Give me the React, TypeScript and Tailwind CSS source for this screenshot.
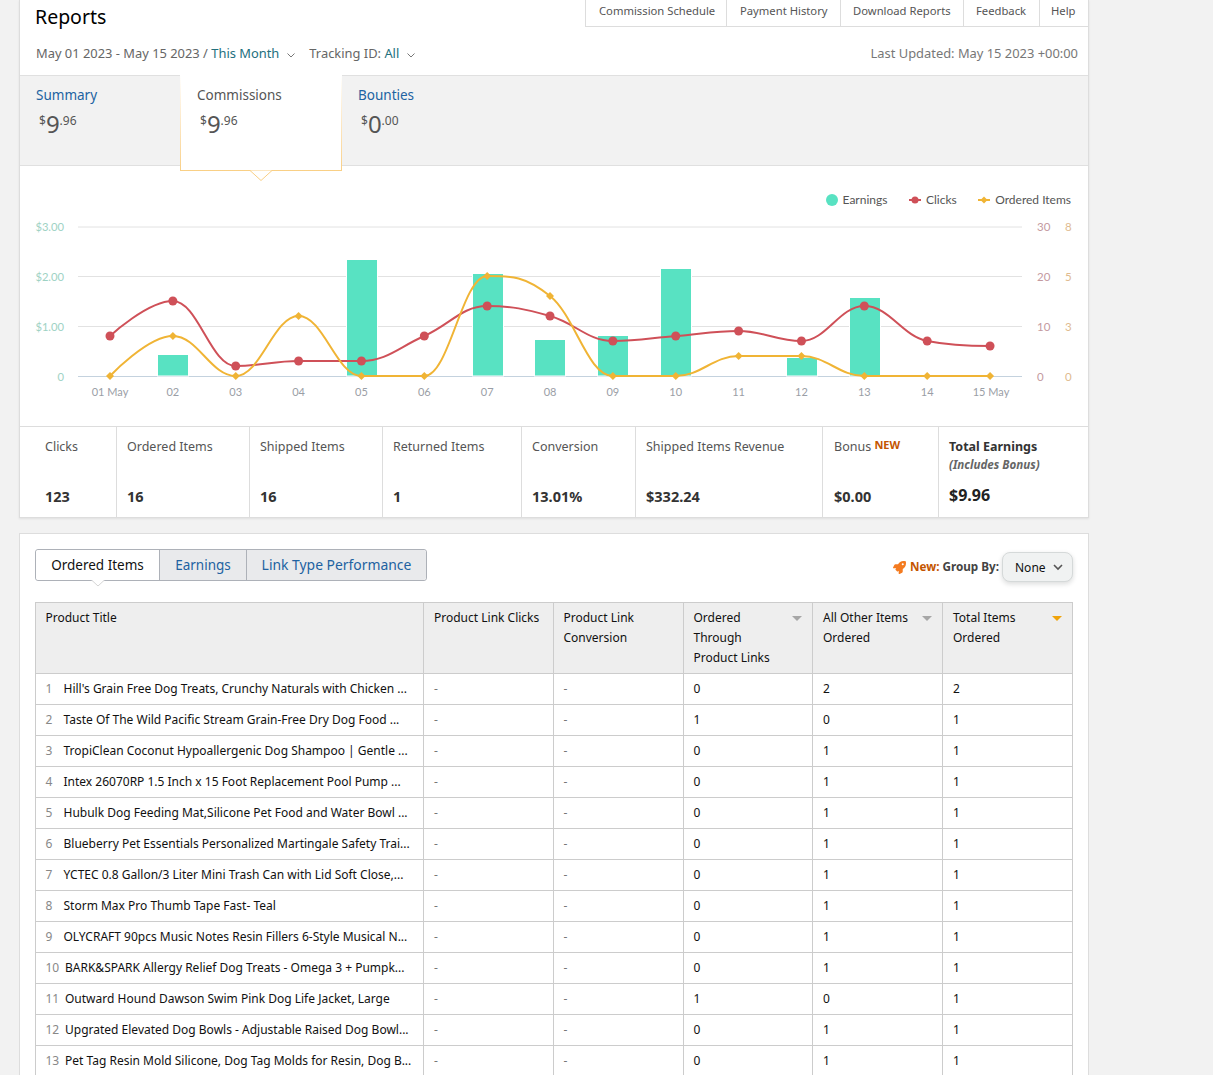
import { FaRocket } from "react-icons/fa";

type Pt = [number, number];

const xs = Array.from({ length: 15 }, (_, i) => 110 + i * 62.86);
const clicks = [336, 301, 366, 361, 361, 336, 306, 316, 341, 336, 331, 341, 306, 341, 346];
const ordered = [376, 336, 376, 316, 376, 376, 276, 296, 376, 376, 356, 356, 376, 376, 376];
const bars: Pt[] = [[173, 355], [362, 260], [488, 274], [550, 340], [613, 336], [676, 269], [802, 358], [865, 298]];
const xLabels = ["01 May", "02", "03", "04", "05", "06", "07", "08", "09", "10", "11", "12", "13", "14", "15 May"];

function spline(ys: number[]): string {
  const pts: Pt[] = ys.map((y, i) => [xs[i], y]);
  const s = 1.5;
  const d = 2.5;
  const ctrl: { l: Pt; r: Pt }[] = pts.map(([x, y], i) => {
    if (i === 0 || i === pts.length - 1) return { l: [x, y], r: [x, y] };
    const [px, py] = pts[i - 1];
    const [nx, ny] = pts[i + 1];
    let lx = (s * x + px) / d;
    let ly = (s * y + py) / d;
    let rx = (s * x + nx) / d;
    let ry = (s * y + ny) / d;
    const c = ((ry - ly) * (rx - x)) / (rx - lx) + y - ry;
    ly += c;
    ry += c;
    if (ly > py && ly > y) {
      ly = Math.max(py, y);
      ry = 2 * y - ly;
    } else if (ly < py && ly < y) {
      ly = Math.min(py, y);
      ry = 2 * y - ly;
    }
    if (ry > ny && ry > y) {
      ry = Math.max(ny, y);
      ly = 2 * y - ry;
    } else if (ry < ny && ry < y) {
      ry = Math.min(ny, y);
      ly = 2 * y - ry;
    }
    return { l: [lx, ly], r: [rx, ry] };
  });
  let out = `M${pts[0][0]} ${pts[0][1]}`;
  for (let i = 1; i < pts.length; i++) {
    out += ` C${ctrl[i - 1].r[0]} ${ctrl[i - 1].r[1]} ${ctrl[i].l[0]} ${ctrl[i].l[1]} ${pts[i][0]} ${pts[i][1]}`;
  }
  return out;
}

const topLinks = [
  { t: "Commission Schedule", c: "w-[141px] pl-[13px]" },
  { t: "Payment History", c: "w-[114px] pl-[13px]" },
  { t: "Download Reports", c: "w-[123px] pl-[12px]" },
  { t: "Feedback", c: "w-[76px] pl-[12px]" },
  { t: "Help", c: "w-[48px] pl-[11px]" },
];

const metrics = [
  { l: "Clicks", v: "123", c: "w-[97px] pl-[25px]" },
  { l: "Ordered Items", v: "16", c: "w-[133px] pl-[10px]" },
  { l: "Shipped Items", v: "16", c: "w-[133px] pl-[10px]" },
  { l: "Returned Items", v: "1", c: "w-[139px] pl-[10px]" },
  { l: "Conversion", v: "13.01%", c: "w-[114px] pl-[10px]" },
  { l: "Shipped Items Revenue", v: "$332.24", c: "w-[187px] pl-[10px]" },
];

const rows: [string, number, number, number][] = [
  ["Hill's Grain Free Dog Treats, Crunchy Naturals with Chicken ...", 0, 2, 2],
  ["Taste Of The Wild Pacific Stream Grain-Free Dry Dog Food ...", 1, 0, 1],
  ["TropiClean Coconut Hypoallergenic Dog Shampoo | Gentle ...", 0, 1, 1],
  ["Intex 26070RP 1.5 Inch x 15 Foot Replacement Pool Pump ...", 0, 1, 1],
  ["Hubulk Dog Feeding Mat,Silicone Pet Food and Water Bowl ...", 0, 1, 1],
  ["Blueberry Pet Essentials Personalized Martingale Safety Trai...", 0, 1, 1],
  ["YCTEC 0.8 Gallon/3 Liter Mini Trash Can with Lid Soft Close,...", 0, 1, 1],
  ["Storm Max Pro Thumb Tape Fast- Teal", 0, 1, 1],
  ["OLYCRAFT 90pcs Music Notes Resin Fillers 6-Style Musical N...", 0, 1, 1],
  ["BARK&SPARK Allergy Relief Dog Treats - Omega 3 + Pumpk...", 0, 1, 1],
  ["Outward Hound Dawson Swim Pink Dog Life Jacket, Large", 1, 0, 1],
  ["Upgrated Elevated Dog Bowls - Adjustable Raised Dog Bowl...", 0, 1, 1],
  ["Pet Tag Resin Mold Silicone, Dog Tag Molds for Resin, Dog B...", 0, 1, 1],
];

function Chevron() {
  return (
    <svg width="8" height="5" viewBox="0 0 8 5" className="mt-[4px]">
      <path d="M0.5 0.5 L4 4 L7.5 0.5" fill="none" stroke="#777" strokeWidth="1" />
    </svg>
  );
}

function Money({ w, f }: { w: string; f: string }) {
  return (
    <div className="mt-[3px] ml-[3px] flex items-start text-[#555]">
      <span className="text-[12px] leading-[18px] mt-[5px]">$</span>
      <span className="text-[24px] leading-[28px] mt-[3px]">{w}</span>
      <span className="text-[12px] leading-[18px] mt-[5px]">.{f}</span>
    </div>
  );
}

function Sort({ color }: { color: string }) {
  return (
    <svg width="10" height="5" viewBox="0 0 10 5" className="mt-[8px] shrink-0">
      <path d="M0 0 H10 L5 5 Z" fill={color} />
    </svg>
  );
}

function Chart() {
  return (
    <svg width="1068" height="211" viewBox="20 215 1068 211" className="block font-['Lato',sans-serif]">
      {[227, 276.5, 326.5].map((y) => (
        <line key={y} x1="78" x2="1022" y1={y} y2={y} stroke="#e2e2e2" strokeWidth="1" />
      ))}
      <line x1="78" x2="1022" y1="376.5" y2="376.5" stroke="#c4d2de" strokeWidth="1" />
      {bars.map(([x, y]) => (
        <rect key={x} x={x - 15.5} y={y - 0.5} width="31" height={376.5 - y} fill="#58e2c2" stroke="#fff" strokeWidth="1" />
      ))}
      <path d={spline(clicks)} fill="none" stroke="#cf5058" strokeWidth="2" />
      <path d={spline(ordered)} fill="none" stroke="#f0b435" strokeWidth="2" />
      {clicks.map((y, i) => (
        <circle key={i} cx={xs[i]} cy={y} r="4.5" fill="#cf5058" />
      ))}
      {ordered.map((y, i) => (
        <path key={i} d={`M${xs[i]} ${y - 4} L${xs[i] + 4} ${y} L${xs[i]} ${y + 4} L${xs[i] - 4} ${y} Z`} fill="#f0b435" />
      ))}
      {[["$3.00", 231], ["$2.00", 281], ["$1.00", 331], ["0", 381]].map(([t, y]) => (
        <text key={t} x="64" y={y} textAnchor="end" fontSize="11.2" fill="#9ed2c4">{t}</text>
      ))}
      {[["30", "8", 231], ["20", "5", 281], ["10", "3", 331], ["0", "0", 381]].map(([a, b, y]) => (
        <g key={String(y)}>
          <text x="1037" y={y} fontSize="11.5" fill="#c49a9f">{a}</text>
          <text x="1065" y={y} fontSize="11.5" fill="#e0bb90">{b}</text>
        </g>
      ))}
      {xLabels.map((t, i) => (
        <text key={t} x={xs[i] + (i === 14 ? 1 : 0)} y="396" textAnchor="middle" fontSize="11" fill="#9a9ea6">{t}</text>
      ))}
    </svg>
  );
}

export default function App() {
  return (
    <div className="h-[1075px] overflow-hidden bg-[#f2f2f2] pl-[19px] font-['Noto_Sans',sans-serif] text-[12px] text-[#111]">
      <div className="w-[1070px] bg-white border-x border-b border-[#dddddd] shadow-[0_1px_2px_rgba(0,0,0,0.08)]">
        <div className="flex justify-between h-[27px]">
          <h1 className="pl-[15px] pt-[3px] text-[19.5px] leading-[28px] font-normal text-black">Reports</h1>
          <nav className="flex border-b border-[#dddddd] border-l">
            {topLinks.map((l, i) => (
              <a key={l.t} className={`${l.c} h-[26px] leading-[22px] text-[11.25px] text-[#555] ${i < 4 ? "border-r border-[#dddddd]" : ""}`}>{l.t}</a>
            ))}
          </nav>
        </div>
        <div className="flex justify-between items-center h-[48px] pt-[6px] pl-[16px] pr-[10px] text-[12.9px] text-[#666]">
          <div className="flex items-center">
            <span>May 01 2023 - May 15 2023 / <span className="text-[#23707e]">This Month</span></span>
            <span className="ml-[8px]"><Chevron /></span>
            <span className="ml-[14px]">Tracking ID: <span className="text-[#23707e]">All</span></span>
            <span className="ml-[8px]"><Chevron /></span>
          </div>
          <span className="text-[#777]">Last Updated: May 15 2023 +00:00</span>
        </div>
        <div className="flex h-[91px] bg-[#f2f2f2] border-y border-[#e0e0e0] text-[13.5px]">
          <div className="w-[160px] pl-[16px] pt-[10px]">
            <div className="text-[#2162a1] leading-[18px]">Summary</div>
            <Money w="9" f="96" />
          </div>
          <div className="relative z-10 w-[162px] h-[96px] -mt-px bg-gradient-to-b from-white to-[#f9cf85] px-px pb-px">
            <div className="h-full bg-white pl-[16px] pt-[11px]">
              <div className="text-[#555] leading-[18px]">Commissions</div>
              <Money w="9" f="96" />
            </div>
            <svg width="24" height="12" viewBox="0 0 24 12" className="absolute left-[69px] top-[95px]">
              <path d="M1 0.5 L12 10.5 L23 0.5" fill="#fff" stroke="#f9cf85" strokeWidth="1" />
            </svg>
          </div>
          <div className="pl-[16px] pt-[10px]">
            <div className="text-[#2162a1] leading-[18px]">Bounties</div>
            <Money w="0" f="00" />
          </div>
        </div>
        <div className="flex justify-end items-center gap-[21.5px] pt-[19px] h-[49px] pr-[17px] text-[12px] font-['Lato',sans-serif] text-[#555]">
          <span className="flex items-center gap-[5px]"><i className="block w-[12px] h-[12px] rounded-full bg-[#58e2c2]" />Earnings</span>
          <span className="flex items-center gap-[5px]">
            <svg width="12" height="8" viewBox="0 0 12 8"><path d="M0 4H12" stroke="#cf5058" strokeWidth="2" /><circle cx="6" cy="4" r="3.5" fill="#cf5058" /></svg>
            Clicks
          </span>
          <span className="flex items-center gap-[5px]">
            <svg width="12" height="8" viewBox="0 0 12 8"><path d="M0 4H12" stroke="#f0b435" strokeWidth="2" /><path d="M6 0.5L9.5 4L6 7.5L2.5 4Z" fill="#f0b435" /></svg>
            Ordered Items
          </span>
        </div>
        <Chart />
        <div className="flex h-[91px] border-t border-[#dddddd] ml-0">
          {metrics.map((m) => (
            <div key={m.l} className={`${m.c} border-r border-[#dddddd] pt-[10px] flex flex-col justify-between pb-[11px]`}>
              <div className="text-[12.5px] leading-[20px] text-[#555]">{m.l}</div>
              <div className="text-[14.5px] leading-[20px] font-bold text-[#333]">{m.v}</div>
            </div>
          ))}
          <div className="w-[116px] border-r border-[#dddddd] pl-[11px] pt-[10px] pb-[11px] flex flex-col justify-between">
            <div className="text-[12.5px] leading-[20px] text-[#555]">Bonus <span className="relative -top-[2px] text-[11px] font-bold text-[#c45500]">NEW</span></div>
            <div className="text-[14.5px] leading-[20px] font-bold text-[#333]">$0.00</div>
          </div>
          <div className="pl-[10px] pt-[10px]">
            <div className="text-[12.5px] leading-[20px] font-bold text-[#333]">Total Earnings</div>
            <div className="text-[11.6px] leading-[16px] font-bold italic text-[#666]">(Includes Bonus)</div>
            <div className="mt-[11px] text-[16px] leading-[22px] font-bold text-[#222]">$9.96</div>
          </div>
        </div>
      </div>

      <div className="mt-[15px] w-[1070px] bg-white border border-[#dddddd] pt-[15px] pl-[15px] pb-[20px]">
        <div className="flex justify-between items-start pr-[15px]">
          <div className="relative flex h-[32px] border border-[#adb1b8] rounded-[3px] text-[13.5px] leading-[30px]">
            <div className="w-[124px] text-center bg-white rounded-l-[3px] text-[#111] border-r border-[#adb1b8]">Ordered Items</div>
            <div className="w-[87px] text-center bg-[#e9eaec] text-[#2162a1] border-r border-[#adb1b8]">Earnings</div>
            <div className="w-[179px] text-center bg-[#e9eaec] rounded-r-[3px] text-[13.9px] text-[#2162a1]">Link Type Performance</div>
            <svg width="14" height="7" viewBox="0 0 14 7" className="absolute left-[55px] top-[30px]">
              <path d="M0.5 0 L7 6 L13.5 0" fill="#fff" stroke="#d5d5d5" strokeWidth="1" />
            </svg>
          </div>
          <div className="flex items-center mt-[3px]">
            <FaRocket className="text-[#f47b20] w-[13px] h-[13px] mr-[4px]" />
            <span className="text-[11.7px] font-bold text-[#c45500]">New:</span>
            <span className="ml-[3px] mr-[3px] text-[11.7px] font-bold text-[#444]">Group By:</span>
            <div className="flex items-center justify-between w-[71px] h-[30px] pl-[12px] pr-[9px] rounded-[8px] border border-[#d5d9d9] bg-[#f0f2f2] shadow-[0_2px_5px_rgba(15,17,17,0.15)] text-[12px] text-[#0f1111]">
              <span className="mt-[1px]">None</span>
              <svg width="10" height="7" viewBox="0 0 10 7"><path d="M1 1 L5 5 L9 1" fill="none" stroke="#555" strokeWidth="1.6" /></svg>
            </div>
          </div>
        </div>

        <table className="mt-[20px] table-fixed border-collapse w-[1037px] text-[12px] leading-[20px] text-[#111]">
          <colgroup>
            <col className="w-[388px]" />
            <col className="w-[130px]" />
            <col className="w-[130px]" />
            <col className="w-[129px]" />
            <col className="w-[130px]" />
            <col className="w-[130px]" />
          </colgroup>
          <thead>
            <tr className="h-[71px] bg-[#eeeeee] align-top text-left">
              <th className="border border-[#cccccc] pl-[9.5px] pt-[5px] font-normal">Product Title</th>
              <th className="border border-[#cccccc] pl-[10px] pt-[5px] font-normal">Product Link Clicks</th>
              <th className="border border-[#cccccc] pl-[9.5px] pt-[5px] font-normal">Product Link<br />Conversion</th>
              <th className="border border-[#cccccc] pl-[9.5px] pr-[10px] pt-[5px] font-normal">
                <div className="flex justify-between"><span>Ordered<br />Through<br />Product Links</span><Sort color="#a6a6a6" /></div>
              </th>
              <th className="border border-[#cccccc] pl-[10px] pr-[10px] pt-[5px] font-normal">
                <div className="flex justify-between"><span>All Other Items<br />Ordered</span><Sort color="#a6a6a6" /></div>
              </th>
              <th className="border border-[#cccccc] pl-[10px] pr-[10px] pt-[5px] font-normal">
                <div className="flex justify-between"><span>Total Items<br />Ordered</span><Sort color="#f0a30a" /></div>
              </th>
            </tr>
          </thead>
          <tbody>
            {rows.map((r, i) => (
              <tr key={i} className="h-[31px]">
                <td className="border border-[#cccccc] pl-[9.5px] whitespace-nowrap overflow-hidden">
                  <span className={`inline-block text-[#888] ${i < 9 ? "w-[18px]" : "w-[19.5px]"}`}>{i + 1}</span>{r[0]}
                </td>
                <td className="border border-[#cccccc] pl-[10px] text-[#777]">-</td>
                <td className="border border-[#cccccc] pl-[9.5px] text-[#777]">-</td>
                <td className="border border-[#cccccc] pl-[9.5px]">{r[1]}</td>
                <td className="border border-[#cccccc] pl-[10px]">{r[2]}</td>
                <td className="border border-[#cccccc] pl-[10px]">{r[3]}</td>
              </tr>
            ))}
          </tbody>
        </table>
      </div>
    </div>
  );
}
